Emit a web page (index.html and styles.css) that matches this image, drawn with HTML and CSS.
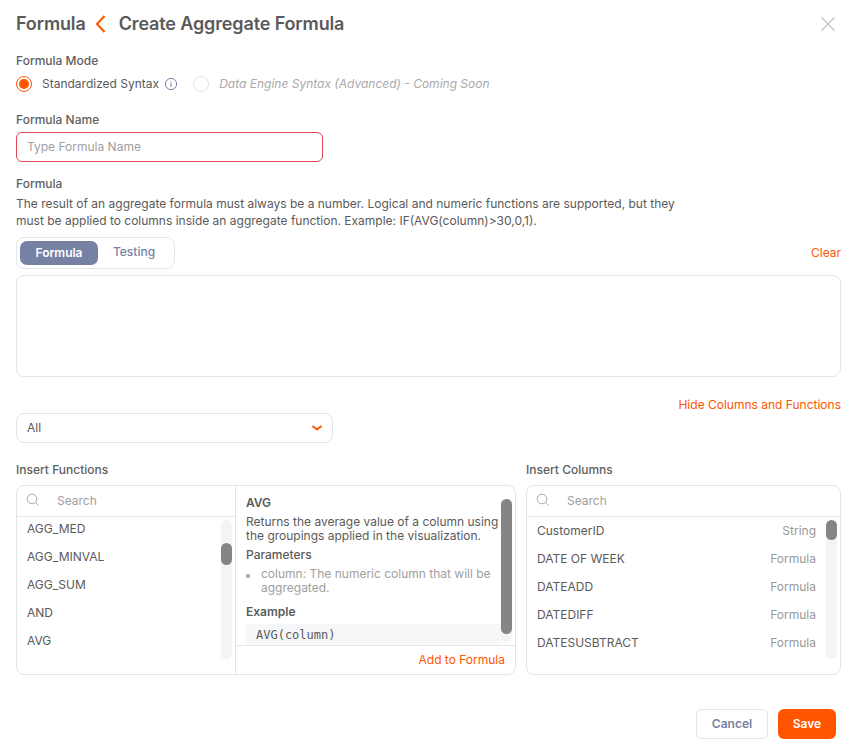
FILE: index.html
```html
<!DOCTYPE html>
<html lang="en">
<head>
<meta charset="utf-8">
<title>Create Aggregate Formula</title>
<link rel="stylesheet" href="styles.css">
</head>
<body>
<main class="page">
  <header class="head">
    <span class="crumb">Formula</span>
    <svg class="back" width="12" height="18" viewBox="0 0 12 18"><path d="M10.500 1 3 9l7.500 8" fill="none" stroke="#ff5500" stroke-width="2"/></svg>
    <h1 class="crumb title">Create Aggregate Formula</h1>
    <svg class="close" width="16" height="16" viewBox="0 0 16 16"><path d="M1.5 1.5l13 13M14.500 1.500l-13 13" fill="none" stroke="#c4c4c4" stroke-width="1.400"/></svg>
  </header>

  <div class="label mode-label">Formula Mode</div>
  <div class="radios">
    <span class="radio on"><i></i></span>
    <span class="radio-text">Standardized Syntax</span>
    <svg class="info" width="14" height="14" viewBox="0 0 14 14"><circle cx="7" cy="7" r="5.600" fill="none" stroke="#7681a3" stroke-width="1"/><path d="M7 6.300v3.400M7 4.200v1" fill="none" stroke="#7681a3" stroke-width="1.100"/></svg>
    <span class="radio off"></span>
    <span class="radio-text disabled">Data Engine Syntax (Advanced) - Coming Soon</span>
  </div>

  <div class="label name-label">Formula Name</div>
  <div class="input error"><span class="placeholder">Type Formula Name</span></div>

  <div class="label formula-label">Formula</div>
  <p class="desc">The result of an aggregate formula must always be a number. Logical and numeric functions are supported, but they must be applied to columns inside an aggregate function. Example: IF(AVG(column)&gt;30,0,1).</p>

  <div class="tab-row">
    <div class="tabs">
      <span class="tab active">Formula</span>
      <span class="tab">Testing</span>
    </div>
    <a class="link">Clear</a>
  </div>
  <div class="editor"></div>

  <div class="hide-row"><a class="link">Hide Columns and Functions</a></div>
  <div class="select">
    <span class="select-value">All</span>
    <svg width="12" height="8" viewBox="0 0 12 8"><path d="M1.500 2 6 5.500 10.500 2" fill="none" stroke="#ff5500" stroke-width="2"/></svg>
  </div>

  <div class="panels">
    <section class="col-left">
      <div class="label panel-label">Insert Functions</div>
      <div class="panel split">
        <div class="fn-list">
          <div class="search">
            <svg width="14" height="14" viewBox="0 0 14 14"><circle cx="6" cy="6" r="4.800" fill="none" stroke="#a8a8a8" stroke-width="1"/><path d="M9.500 9.500l3 3" stroke="#a8a8a8" stroke-width="1"/></svg>
            <span>Search</span>
          </div>
          <div class="rows">
            <ul class="items fns">
              <li>AGG_MED</li>
              <li>AGG_MINVAL</li>
              <li>AGG_SUM</li>
              <li>AND</li>
              <li>AVG</li>
            </ul>
            <div class="track"><div class="thumb thumb-fn"></div></div>
          </div>
        </div>
        <div class="detail">
          <div class="detail-body">
            <div class="detail-text">
              <h2>AVG</h2>
              <p class="d-text">Returns the average value of a column using the groupings applied in the visualization.</p>
              <div class="d-sub">Parameters</div>
              <div class="d-param"><i></i><span>column: The numeric column that will be aggregated.</span></div>
              <h3>Example</h3>
              <div class="code">AVG(column)</div>
            </div>
            <div class="track dark"><div class="thumb thumb-detail"></div></div>
          </div>
          <div class="detail-foot"><a class="link">Add to Formula</a></div>
        </div>
      </div>
    </section>
    <section class="col-right">
      <div class="label panel-label">Insert Columns</div>
      <div class="panel">
        <div class="search">
          <svg width="14" height="14" viewBox="0 0 14 14"><circle cx="6" cy="6" r="4.800" fill="none" stroke="#a8a8a8" stroke-width="1"/><path d="M9.500 9.500l3 3" stroke="#a8a8a8" stroke-width="1"/></svg>
          <span>Search</span>
        </div>
        <div class="rows">
          <ul class="items cols">
            <li>CustomerID<em>String</em></li>
            <li>DATE OF WEEK<em>Formula</em></li>
            <li>DATEADD<em>Formula</em></li>
            <li>DATEDIFF<em>Formula</em></li>
            <li>DATESUSBTRACT<em>Formula</em></li>
          </ul>
          <div class="track"><div class="thumb thumb-col"></div></div>
        </div>
      </div>
    </section>
  </div>

  <footer class="foot">
    <button class="btn cancel">Cancel</button>
    <button class="btn save">Save</button>
  </footer>
</main>
</body>
</html>
```
FILE: styles.css
```css
* { box-sizing: border-box; }
html, body { margin: 0; height: 100%; background: #fff; }
body { font-family: Inter, "Liberation Sans", sans-serif; font-size: 12px; color: #5a5a5a; overflow: hidden; }
.page { width: 855px; height: 750px; padding: 0 14px 0 16px; }
.head { display: flex; align-items: center; height: 47px; }
.crumb { font-size: 18px; font-weight: 600; line-height: 24px; color: #5a5a5a; margin: 0; letter-spacing: -0.13px; }
.back { margin: 0 13px 0 8px; }
.close { margin-left: auto; margin-right: 5px; }
.label { font-size: 12px; font-weight: 500; line-height: 16px; color: #606060; }
.mode-label { margin-top: 6px; }
.radios { display: flex; align-items: center; height: 18px; margin-top: 6px; }
.radio { width: 16px; height: 16px; border-radius: 50%; display: flex; align-items: center; justify-content: center; flex: none; }
.radio.on { border: 1px solid #ff5500; }
.radio.on i { width: 10px; height: 10px; border-radius: 50%; background: #ff5500; }
.radio.off { border: 1px solid #e2e4e8; margin-left: 15px; }
.radio-text { margin-left: 10px; font-size: 12px; line-height: 16px; color: #5a5a5a; }
.radio-text.disabled { color: #aaa; font-style: italic; margin-left: 10px; }
.info { margin-left: 5px; }
.name-label { margin-top: 19px; }
.input { width: 307px; height: 30px; margin-top: 4px; border-radius: 6px; border: 1px solid #e0e3e8; display: flex; align-items: center; padding: 0 10px 2px; }
.input.error { border-color: #e2474f; }
.placeholder { color: #a0a0a0; font-size: 12px; }
.formula-label { margin-top: 14px; }
.desc { width: 680px; margin: 3px 0 0; font-size: 12px; line-height: 17px; color: #5a5a5a; }
.tab-row { display: flex; justify-content: space-between; align-items: center; margin-top: 8px; height: 32px; }
.tabs { display: flex; align-items: center; width: 159px; height: 32px; border: 1px solid #e2e5ea; border-radius: 8px; padding: 0 3px; }
.tab { flex: none; width: 72px; height: 24px; border-radius: 7px; text-align: center; line-height: 22px; font-size: 12px; font-weight: 500; color: #7681a3; }
.tab.active { width: 78px; background: #7681a3; color: #fff; font-weight: 600; line-height: 24px; }
.link { color: #ff5500; font-size: 12px; line-height: 16px; }
.editor { height: 102px; margin-top: 6px; border: 1px solid #e2e5ea; border-radius: 8px; }
.hide-row { display: flex; justify-content: flex-end; margin-top: 20px; }
.select { width: 317px; height: 30px; border: 1px solid #e2e5ea; border-radius: 8px; display: flex; justify-content: space-between; align-items: center; padding: 0 9px 0 10px; }
.select-value { margin-bottom: 2px; }
.panels { display: flex; gap: 10px; margin-top: 19px; }
.col-left { width: 500px; }
.col-right { width: 315px; }
.panel-label { height: 16px; }
.panel { height: 190px; margin-top: 7px; border: 1px solid #e2e5ea; border-radius: 8px; overflow: hidden; }
.panel.split { display: flex; }
.fn-list { width: 219px; border-right: 1px solid #e2e5ea; flex: none; }
.search { height: 31px; display: flex; align-items: center; gap: 17px; padding: 0 0 2px 9px; border-bottom: 1px solid #e2e5ea; color: #a0a0a0; font-size: 12px; }
.rows { display: flex; justify-content: space-between; padding-top: 3px; }
.items { list-style: none; margin: 0; padding: 0; flex: 1; }
.fns { margin-top: -2px; }
.items li { height: 28px; line-height: 22px; padding-left: 10px; font-size: 12px; color: #5a5a5a; }
.cols li { display: flex; justify-content: space-between; padding-right: 10px; }
.cols em { font-style: normal; color: #999; }
.track { width: 11px; height: 139px; background: #f4f4f4; border-radius: 6px; margin-right: 3px; flex: none; }
.thumb { background: #858585; border-radius: 6px; width: 100%; }
.thumb-fn { height: 22px; margin-top: 23px; }
.thumb-col { height: 20px; }
.detail { flex: 1; display: flex; flex-direction: column; }
.detail-body { height: 159px; display: flex; overflow: hidden; padding-left: 10px; }
.detail-text { width: 256px; flex: none; }
.detail-text h2 { margin: 9px 0 0; font-size: 12px; line-height: 16px; font-weight: 600; }
.d-text { margin: 4px 0 0; font-size: 12px; line-height: 14px; }
.d-sub { margin-top: 4px; font-size: 12px; line-height: 16px; font-weight: 500; }
.d-param { display: flex; margin-top: 4px; color: #a0a0a0; font-size: 12px; line-height: 14px; }
.d-param i { width: 4px; height: 4px; background: #a0a0a0; border-radius: 50%; margin: 7px 11px 0 0; flex: none; }
.detail-text h3 { margin: 9px 0 0; font-size: 12px; line-height: 16px; font-weight: 600; }
.code { margin-top: 4px; height: 20px; padding-left: 10px; background: #f6f7f9; font-family: "DejaVu Sans Mono", monospace; font-size: 12px; line-height: 22px; }
.track.dark { height: 143px; margin: 13px 0 0 -1px; background: #f4f4f4; }
.thumb-detail { height: 135px; }
.detail-foot { flex: 1; border-top: 1px solid #e2e5ea; display: flex; justify-content: flex-end; align-items: center; padding-right: 10px; }
.foot { display: flex; justify-content: flex-end; gap: 10px; margin-top: 34px; padding-right: 5px; }
.btn { height: 30px; border-radius: 6px; font-family: inherit; font-size: 12px; font-weight: 600; border: 1px solid transparent; padding: 0 0 2px; }
.cancel { width: 72px; background: #fff; border-color: #e2e5ea; color: #7681a3; }
.save { width: 58px; background: #ff5500; color: #fff; }
```
